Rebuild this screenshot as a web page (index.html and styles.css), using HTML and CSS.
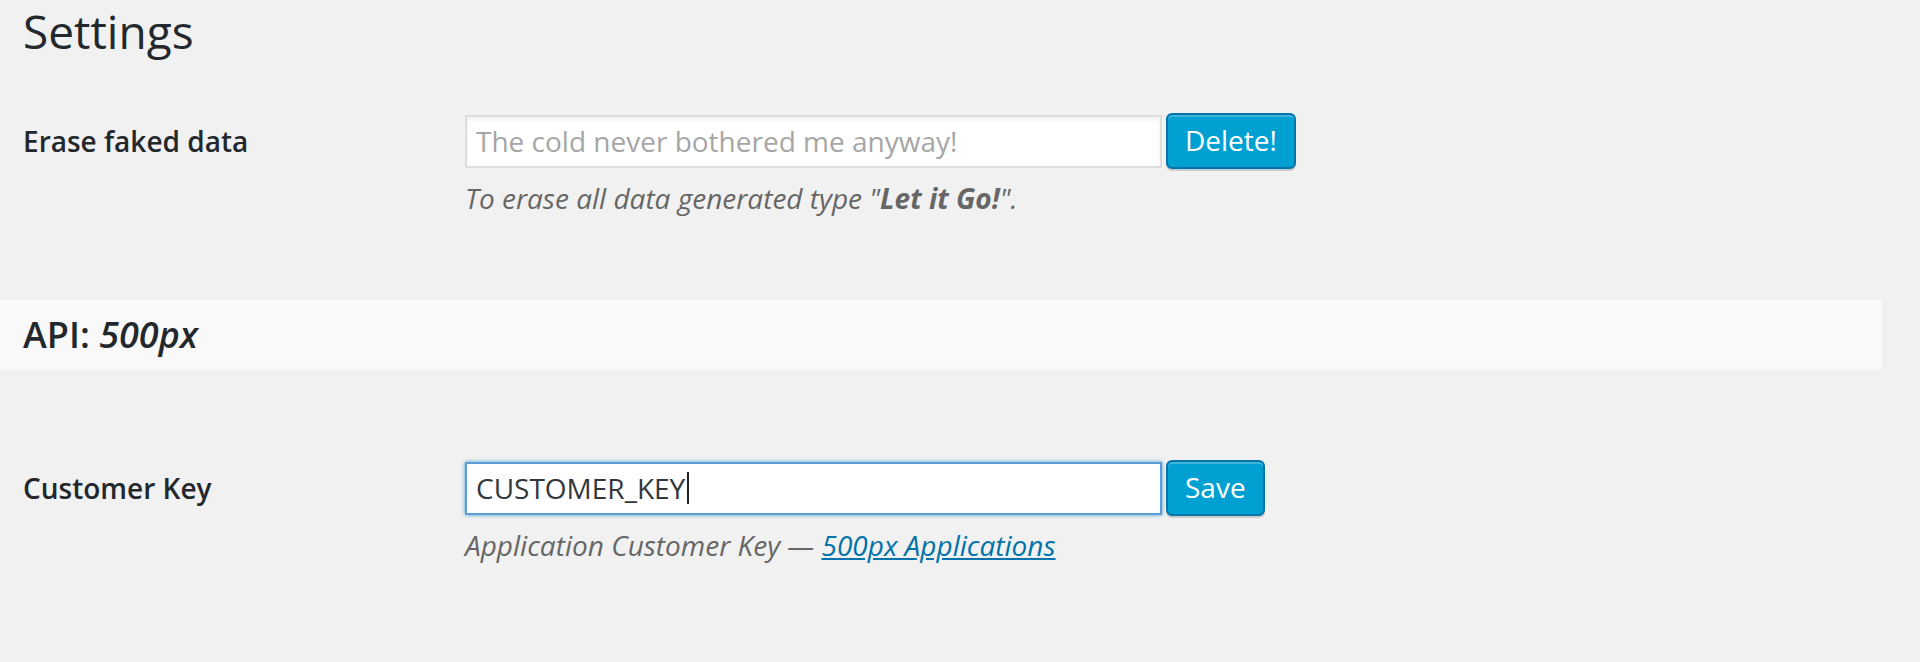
FILE: index.html
```html
<!DOCTYPE html>
<html lang="en">
<head>
<meta charset="utf-8">
<title>Settings</title>
<link rel="stylesheet" href="styles.css">
</head>
<body>
<div class="wrap">
  <h1 class="page-title">Settings</h1>

  <div class="form-row first">
    <div class="label-cell"><label for="erase">Erase faked data</label></div>
    <div class="field-cell">
      <div class="controls">
        <input id="erase" class="text-input" type="text" placeholder="The cold never bothered me anyway!">
        <button class="button-primary delete" type="button">Delete!</button>
      </div>
      <p class="description">To erase all data generated type "<strong>Let it Go!</strong>".</p>
    </div>
  </div>

  <div class="section-band">
    <h2 class="section-title">API: <em>500px</em></h2>
  </div>

  <div class="form-row second">
    <div class="label-cell"><label>Customer Key</label></div>
    <div class="field-cell">
      <div class="controls">
        <div class="text-input focused"><span class="value">CUSTOMER_KEY</span><span class="caret"></span></div>
        <button class="button-primary save" type="button">Save</button>
      </div>
      <p class="description">Application Customer Key — <a href="#">500px Applications</a></p>
    </div>
  </div>
</div>
</body>
</html>
```

FILE: styles.css
```css
html, body {
  margin: 0;
  padding: 0;
  background: #f1f1f1;
}

body {
  font-family: "Open Sans", "Liberation Sans", sans-serif;
  color: #23282d;
}

.wrap {
  padding-top: 1px;
}

.page-title {
  margin: 0;
  padding-left: 23px;
  font-size: 46px;
  font-weight: 400;
  line-height: 60px;
  color: #23282d;
}

.form-row {
  display: grid;
  grid-template-columns: 442px 1fr;
  padding-left: 23px;
}

.form-row.first {
  margin-top: 52px;
}

.form-row.second {
  margin-top: 90px;
}

.label-cell {
  height: 56px;
  display: flex;
  align-items: center;
}

.label-cell label {
  font-size: 28px;
  font-weight: 600;
  color: #23282d;
}

.controls {
  display: flex;
  align-items: center;
  gap: 4px;
  height: 56px;
}

.text-input {
  box-sizing: border-box;
  width: 697px;
  height: 53px;
  margin: 0;
  padding: 0 9px;
  border: 2px solid #dddddd;
  background: #ffffff;
  box-shadow: inset 0 2px 4px rgba(0, 0, 0, 0.07);
  font-family: "Open Sans", "Liberation Sans", sans-serif;
  font-size: 28px;
  color: #32373c;
  outline: none;
}

.text-input::placeholder {
  color: #a6a6a6;
}

.text-input.focused {
  display: flex;
  align-items: center;
  border-color: #5b9dd9;
  box-shadow: 0 0 4px rgba(30, 140, 190, 0.8);
}

.caret {
  display: inline-block;
  width: 2px;
  height: 32px;
  margin-left: 2px;
  background: #222222;
}

.button-primary {
  box-sizing: border-box;
  height: 56px;
  margin: 0;
  padding: 0 17px 2px;
  border: 2px solid #0073aa;
  border-radius: 6px;
  background: #00a0d2;
  box-shadow: inset 0 2px 0 rgba(120, 200, 230, 0.5), 0 2px 0 rgba(0, 0, 0, 0.15);
  color: #ffffff;
  font-family: "Open Sans", "Liberation Sans", sans-serif;
  font-size: 28px;
  font-weight: 500;
  cursor: pointer;
}

.description {
  margin: 9px 0 0;
  font-size: 28px;
  line-height: 40px;
  font-style: italic;
  color: #666666;
}

.description strong {
  font-weight: 700;
}

.description a {
  color: #0073aa;
  text-decoration: underline;
}

.section-band {
  margin-top: 82px;
  margin-right: 38px;
  height: 70px;
  background: #f9f9f9;
  display: flex;
  align-items: center;
  padding-left: 23px;
}

.section-title {
  margin: 0;
  font-size: 36px;
  font-weight: 600;
  line-height: 1;
  color: #23282d;
}

.section-title em {
  font-style: italic;
}
```
